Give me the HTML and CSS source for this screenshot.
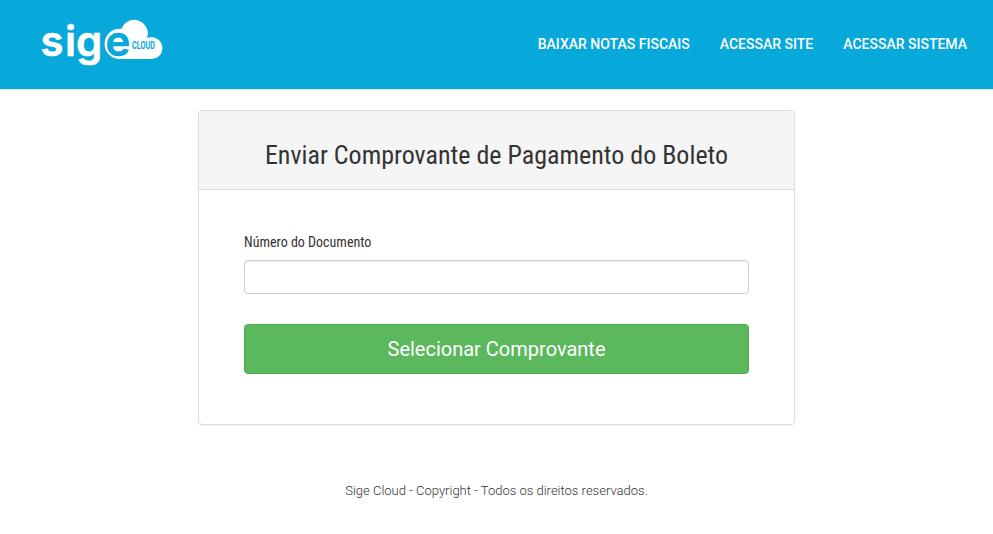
FILE: index.html
```html
<!DOCTYPE html>
<html lang="pt-br">

<head>
    <meta charset="UTF-8" />
    <meta name="viewport" content="width=device-width, initial-scale=1.0" />
    <title>Sige Cloud</title>
    <link rel="stylesheet" href="styles.css">
</head>

<body>

    <header class="topo">
        <a href="#" class="logo" aria-label="Sige Cloud">
            <svg width="124" height="66" viewBox="0 -10 124 66">
                <path d="M77 39 H110 A10.7 10.7 0 0 0 111 17.3 Q109 17 106 18 A13.5 13.5 0 0 0 80.5 8.8 A15 15 0 0 0 77 39 Z" fill="#fff" />
                <text class="logo-nome" y="35.5"><tspan x="-0.5">s</tspan><tspan x="24">i</tspan><tspan x="35">g</tspan><tspan class="logo-e" x="64.5">e</tspan></text>
                <text class="logo-cloud" x="91" y="28.5" textLength="23" lengthAdjust="spacingAndGlyphs">CLOUD</text>
            </svg>
        </a>
        <nav class="menu">
            <a href="#">Baixar Notas Fiscais</a>
            <a href="#">Acessar Site</a>
            <a href="#">Acessar Sistema</a>
        </nav>
    </header>

    <main class="panel">
        <div class="panel-heading">
            <h1>Enviar Comprovante de Pagamento do Boleto</h1>
        </div>
        <form class="panel-body">
            <label for="documento">Número do Documento</label>
            <input type="text" id="documento" class="form-control" />
            <button type="button" class="btn">Selecionar Comprovante</button>
        </form>
    </main>

    <footer class="rodape">Sige Cloud - Copyright - Todos os direitos reservados.</footer>

</body>

</html>
```
FILE: styles.css
```css
* {
    box-sizing: border-box;
    margin: 0;
    padding: 0;
}

body {
    background: #fff;
    color: #333;
    font-family: Roboto, sans-serif;
}

.topo {
    height: 90px;
    padding: 0 26px 0 41px;
    display: flex;
    align-items: flex-start;
    justify-content: space-between;
    background: #07a8da;
    border-bottom: 1px solid #e7e7e7;
}

.logo svg {
    display: block;
    margin-top: 10px;
    overflow: visible;
}

.logo-nome {
    font: 600 42px Inter, sans-serif;
    fill: #fff;
    stroke: #fff;
    stroke-width: 0.6px;
    stroke-linejoin: round;
}

.logo-e {
    fill: #07a8da;
    stroke: #07a8da;
}

.logo-cloud {
    font: bold 10px Roboto, sans-serif;
    fill: #07a8da;
}

.menu {
    display: flex;
    gap: 30px;
    padding-top: 34px;
    line-height: 20px;
}

.menu a {
    color: #fff;
    font-size: 14px;
    font-weight: 500;
    text-decoration: none;
    text-transform: uppercase;
}

.panel {
    width: 597px;
    height: 315px;
    margin: 20px auto 0 198px;
    border: 1px solid #ddd;
    border-radius: 4px;
    box-shadow: 0 1px 1px rgba(0, 0, 0, 0.05);
}

.panel-heading {
    height: 79px;
    padding-top: 28px;
    background: #f5f5f5;
    border-bottom: 1px solid #ddd;
    border-radius: 3px 3px 0 0;
    text-align: center;
}

.panel-heading h1 {
    font: 400 26px/32px "Roboto Condensed", Roboto, sans-serif;
    font-stretch: condensed;
}

.panel-body {
    padding: 42px 45px;
}

.panel-body label {
    display: block;
    margin-bottom: 8px;
    font: 400 14px/20px "Roboto Condensed", Roboto, sans-serif;
    font-stretch: condensed;
}

.form-control {
    display: block;
    width: 505px;
    height: 34px;
    padding: 6px 12px;
    border: 1px solid #ccc;
    border-radius: 4px;
    box-shadow: inset 0 1px 1px rgba(0, 0, 0, 0.075);
}

.btn {
    width: 505px;
    height: 50px;
    margin-top: 30px;
    background: #5cb85c;
    border: 1px solid #4cae4c;
    border-radius: 4px;
    color: #fff;
    font: 400 20px Roboto, sans-serif;
}

.rodape {
    margin-top: 57px;
    text-align: center;
    font-size: 13px;
    font-weight: 300;
    line-height: 18px;
}
```
